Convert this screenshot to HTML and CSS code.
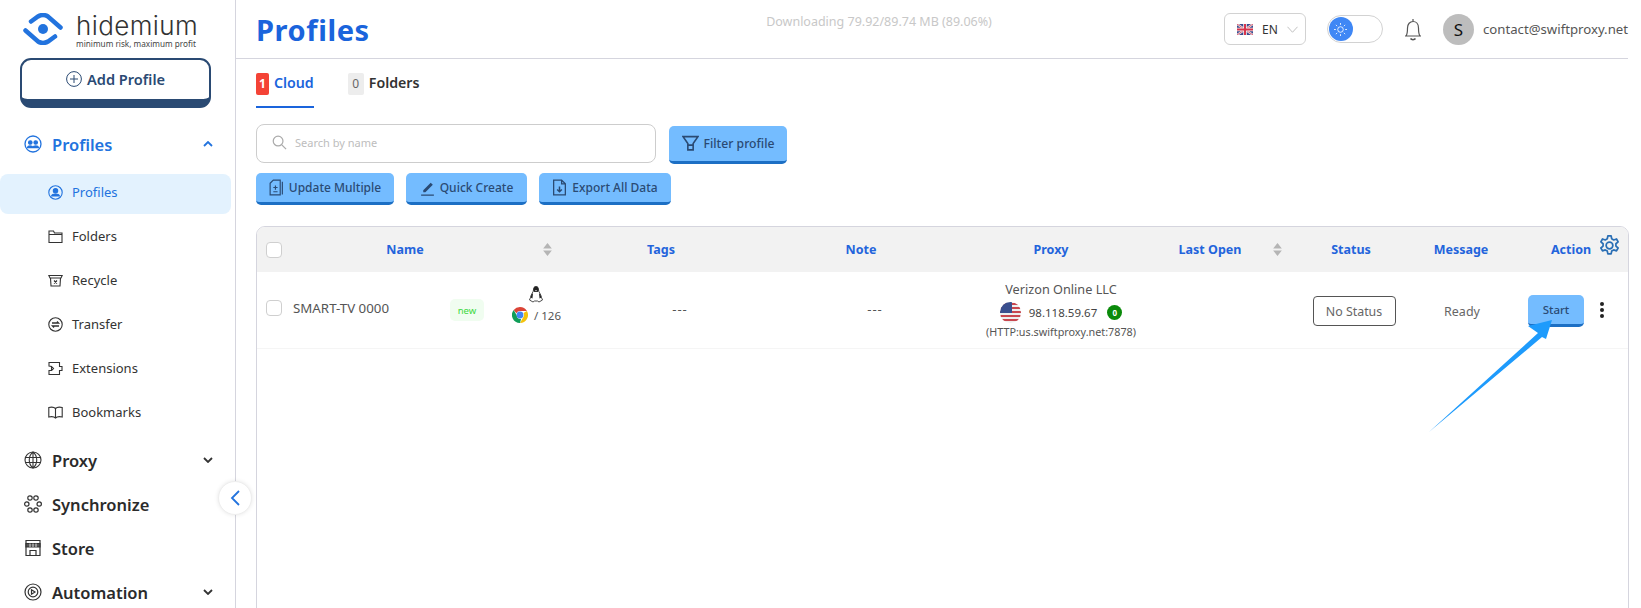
FILE: index.html
```html
<!DOCTYPE html>
<html lang="en">
<head>
<meta charset="utf-8">
<title>Hidemium Profiles</title>
<link rel="stylesheet" href="styles.css">
</head>
<body>
<div class="app">
  <aside class="sidebar">
    <div class="brand">
      <svg class="brand-mark" viewBox="0 0 40 32" fill="none" stroke="#2273de" stroke-width="4.500" stroke-linecap="round">
        <path d="M8 8.500L15 3.500Q20 .5 25 3.500L37.500 14.500"/>
        <path d="M2.500 17.500L15 28.500Q20 31.500 25 28.500L32 23.500"/>
        <circle cx="20" cy="16" r="5" fill="#2273de" stroke="none"/>
      </svg>
      <div class="brand-text">
        <div class="brand-name">hidemium</div>
        <div class="brand-tag">minimum risk, maximum profit</div>
      </div>
    </div>
    <button class="add-btn">
      <svg class="ic-add" viewBox="0 0 16 16" fill="none" stroke="#2a4a73" stroke-width="1"><circle cx="8" cy="8" r="7.400"/><path d="M8 4v8M4 8h8"/></svg>
      Add Profile
    </button>
    <nav class="nav">
      <a class="nav-main active">
        <svg class="ic-main" viewBox="0 0 18 18" fill="none" stroke="#2273de" stroke-width="1.300"><circle cx="9" cy="9" r="8"/><circle cx="6.300" cy="7.500" r="1.700" fill="#2273de"/><circle cx="11.700" cy="7.500" r="1.700" fill="#2273de"/><path d="M3.500 12.500c.5-2 4.500-2 5.500 0zM9 12.500c.5-2 5-2 5.500 0z" fill="#2273de"/></svg>
        <span>Profiles</span>
        <svg class="chev" viewBox="0 0 10 6" fill="none" stroke="#2273de" stroke-width="1.800"><path d="M1 5l4-4 4 4"/></svg>
      </a>
      <div class="subnav">
        <a class="nav-sub active">
          <svg class="ic-sub" viewBox="0 0 15 15" fill="none" stroke="#2273de" stroke-width="1.100"><circle cx="7.500" cy="7.500" r="6.700"/><circle cx="7.500" cy="5.800" r="2.200" fill="#2273de"/><path d="M3.600 11c.8-2.600 7-2.600 7.800 0z" fill="#2273de"/></svg>
          <span>Profiles</span>
        </a>
        <a class="nav-sub">
          <svg class="ic-sub" viewBox="0 0 15 15" fill="none" stroke="#333" stroke-width="1.100"><path d="M1 13.500V2h4.500l1 2H14v9.500zM1 5.500h13"/></svg>
          <span>Folders</span>
        </a>
        <a class="nav-sub">
          <svg class="ic-sub" viewBox="0 0 15 15" fill="none" stroke="#333" stroke-width="1.100"><path d="M.8 2.500h13.400L13 5H2zM2.500 5l.5 8h9l.5-8M6 7.500l3 3M9 7.500l-3 3"/></svg>
          <span>Recycle</span>
        </a>
        <a class="nav-sub">
          <svg class="ic-sub" viewBox="0 0 15 15" fill="none" stroke="#333" stroke-width="1.100"><circle cx="7.500" cy="7.500" r="6.700"/><path d="M4 6h6.500L9 4.500M11 9H4.500L6 10.500" stroke-width="1.300"/></svg>
          <span>Transfer</span>
        </a>
        <a class="nav-sub">
          <svg class="ic-sub" viewBox="0 0 15 15" fill="none" stroke="#333" stroke-width="1.100"><path d="M1 5V1.500h10.500V5.500h2.500v4h-2.500v4H1V9.500h2.500V5.500zM4 6l1.500 1.500L4 9"/></svg>
          <span>Extensions</span>
        </a>
        <a class="nav-sub">
          <svg class="ic-sub" viewBox="0 0 15 15" fill="none" stroke="#333" stroke-width="1.100"><path d="M7.500 3.500C6 2 3 2 .8 2.500v9.500c2.200-.5 5.200-.5 6.700 1 1.500-1.500 4.500-1.500 6.700-1V2.500C12 2 9 2 7.500 3.500zM7.500 3.500V13"/></svg>
          <span>Bookmarks</span>
        </a>
      </div>
      <a class="nav-main">
        <svg class="ic-main" viewBox="0 0 18 18" fill="none" stroke="#333" stroke-width="1.100"><circle cx="9" cy="9" r="8"/><path d="M1.500 6.500h15M1.500 11.500h15M9 1c-5 4-5 12 0 16M9 1c5 4 5 12 0 16M9 1v16"/></svg>
        <span>Proxy</span>
        <svg class="chev" viewBox="0 0 10 6" fill="none" stroke="#333" stroke-width="1.800"><path d="M1 1l4 4 4-4"/></svg>
      </a>
      <a class="nav-main">
        <svg class="ic-main" viewBox="0 0 18 18" fill="none" stroke="#333" stroke-width="1.200"><circle cx="6" cy="3" r="2.200"/><circle cx="12" cy="3" r="2.200"/><circle cx="2.800" cy="9" r="2.200"/><circle cx="15.200" cy="9" r="2.200"/><circle cx="6" cy="15" r="2.200"/><circle cx="12" cy="15" r="2.200"/></svg>
        <span>Synchronize</span>
      </a>
      <a class="nav-main">
        <svg class="ic-main" viewBox="0 0 18 18" fill="none" stroke="#333" stroke-width="1.200"><path d="M2 1.500h14v15H2zM2 4.500h14M6 16.500v-5h6v5"/><path d="M2 4.500h14V8H2z" fill="#555"/><path d="M6 4.500V8M9 4.500V8M12 4.500V8" stroke="#fff" stroke-width=".8"/></svg>
        <span>Store</span>
      </a>
      <a class="nav-main">
        <svg class="ic-main" viewBox="0 0 18 18" fill="none" stroke="#333" stroke-width="1.200"><circle cx="9" cy="9" r="8"/><circle cx="9" cy="9" r="4.800"/><path d="M7.500 6.800l3.500 2.200-3.500 2.200z"/></svg>
        <span>Automation</span>
        <svg class="chev" viewBox="0 0 10 6" fill="none" stroke="#333" stroke-width="1.800"><path d="M1 1l4 4 4-4"/></svg>
      </a>
    </nav>
  </aside>

  <button class="collapse">
    <svg viewBox="0 0 10 16" fill="none" stroke="#2273de" stroke-width="1.800"><path d="M8.500 1L1.500 8l7 7"/></svg>
  </button>

  <main class="main">
    <header class="topbar">
      <h1 class="title">Profiles</h1>
      <div class="download">Downloading 79.92/89.74 MB (89.06%)</div>
      <div class="top-tools">
        <div class="lang">
          <svg class="flag-uk" viewBox="0 0 16 11"><rect width="16" height="11" fill="#3b4a8c"/><path d="M0 0l16 11M16 0L0 11" stroke="#eee" stroke-width="2.200"/><path d="M0 0l16 11M16 0L0 11" stroke="#d8344c" stroke-width=".8"/><path d="M8 0v11M0 5.500h16" stroke="#eee" stroke-width="3.600"/><path d="M8 0v11M0 5.500h16" stroke="#d8344c" stroke-width="2"/></svg>
          <span class="lang-code">EN</span>
          <svg class="lang-chev" viewBox="0 0 12 7" fill="none" stroke="#bbb" stroke-width="1"><path d="M.5.500L6 6.500 11.500.5"/></svg>
        </div>
        <div class="toggle">
          <span class="knob">
            <svg viewBox="0 0 14 14" fill="none" stroke="#fff" stroke-width=".9"><circle cx="7" cy="7" r="3"/><path d="M7 0v2M7 12v2M0 7h2M12 7h2M2 2l1.400 1.400M10.600 10.600L12 12M2 12l1.400-1.400M10.600 3.400L12 2"/></svg>
          </span>
        </div>
        <svg class="bell" viewBox="0 0 18 23" fill="none" stroke="#555" stroke-width="1.200"><path d="M2 18c1.500-2 1.500-3 1.500-8C3.500 6 6 3.500 9 3.500S14.500 6 14.500 10c0 5 0 6 1.500 8zM1 18h16M9 1v2.500"/><path d="M6.500 20.500c1 1.500 4 1.500 5 0" stroke-width="1.500"/></svg>
        <div class="avatar">S</div>
        <span class="email">contact@swiftproxy.net</span>
      </div>
    </header>

    <div class="content">
      <div class="tabs">
        <div class="tab active"><span class="count red">1</span><span class="tab-label">Cloud</span></div>
        <div class="tab"><span class="count grey">0</span><span class="tab-label">Folders</span></div>
      </div>

      <div class="search-row">
        <label class="search">
          <svg viewBox="0 0 16 16" fill="none" stroke="#aaa" stroke-width="1.300"><circle cx="6.500" cy="6.500" r="5.200"/><path d="M10.500 10.500L15 15"/></svg>
          <span>Search by name</span>
        </label>
        <button class="btn filter">
          <svg class="ic-filter" viewBox="0 0 16 16" fill="none" stroke="#2a4a73" stroke-width="1.500"><path d="M1 1.500h14L10.500 8v6h-5V8zM5.500 9.500h5"/></svg>
          Filter profile
        </button>
      </div>

      <div class="actions">
        <button class="btn">
          <svg class="ic-btn" viewBox="0 0 14 16" fill="none" stroke="#2a4a73" stroke-width="1.100"><path d="M1 4l3-3h6.500v14H1zM12.500 2.500v12M6 6v4M4 8h4M4 12h4"/></svg>
          Update Multiple
        </button>
        <button class="btn">
          <svg class="ic-btn" viewBox="0 0 14 16"><path d="M3 10.500l7-7 2 2-7 7H3zM1 14.500h12v1.300H1z" fill="#2a4a73"/></svg>
          Quick Create
        </button>
        <button class="btn">
          <svg class="ic-btn" viewBox="0 0 14 16" fill="none" stroke="#2a4a73" stroke-width="1.200"><path d="M1.500 1h7.500l3.500 3.500v10.500h-11zM9 1v3.500h3.500"/><path d="M7 7v5M4.800 9.800L7 12l2.200-2.200" stroke-width="1.400"/></svg>
          Export All Data
        </button>
      </div>

      <section class="table">
        <div class="thead">
          <div class="cell"><span class="check"></span></div>
          <div class="cell th">Name</div>
          <div class="cell"><svg class="sort" viewBox="0 0 8 12"><path d="M4 0l4 5H0zM4 12l4-5H0z" fill="#b5b5b5"/></svg></div>
          <div class="cell th">Tags</div>
          <div class="cell th">Note</div>
          <div class="cell th">Proxy</div>
          <div class="cell th last-open">Last Open</div>
          <div class="cell"><svg class="sort" viewBox="0 0 8 12"><path d="M4 0l4 5H0zM4 12l4-5H0z" fill="#b5b5b5"/></svg></div>
          <div class="cell th">Status</div>
          <div class="cell th">Message</div>
          <div class="cell th action-th">Action</div>
          <div class="cell gear-cell">
            <svg class="gear" viewBox="0 0 24 24" fill="none" stroke="#2a6fb5" stroke-width="1.800" stroke-linejoin="round"><path d="M10.300 2h3.400l.6 3 2.100 1.200 2.900-1 1.700 3-2.300 2v2.400l2.300 2-1.700 3-2.900-1-2.100 1.200-.6 3h-3.400l-.6-3-2.100-1.200-2.900 1-1.700-3 2.300-2v-2.400l-2.300-2 1.700-3 2.900 1 2.100-1.200z"/><circle cx="12" cy="12" r="3.500"/></svg>
          </div>
        </div>
        <div class="trow">
          <div class="cell"><span class="check row-check"></span></div>
          <div class="cell name-cell"><span class="pname">SMART-TV 0000</span><span class="tag-new">new</span></div>
          <div class="cell browser-cell">
            <svg class="tux" viewBox="0 0 14 17"><path d="M7 .5C5 .5 4.400 2 4.500 4c0 2-2.500 4-3 7.500L.5 14l3.500 2 1.500-1h3L10 16l3.500-2-1-2.500C12 8 9.500 6 9.500 4 9.600 2 9 .5 7 .5z" fill="#fff" stroke="#222" stroke-width=".8"/><path d="M7 .5C5 .5 4.400 2 4.500 4.500c0 1 .5 1.500 2.500 1.500s2.500-.5 2.500-1.500C9.600 2 9 .5 7 .5zM4 7C2.500 8.500 1.800 10 1.500 11.500l2 1C3.500 10.500 4 9 4 7zM10 7c1.500 1.500 2.200 3 2.500 4.500l-2 1C10.500 10.500 10 9 10 7z" fill="#222"/><path d="M5.800 4.300h2.400L7 5.600z" fill="#ddd"/></svg>
            <div class="browser-ver">
              <svg class="chrome" viewBox="0 0 16 16"><path d="M8 0a8 8 0 0 1 6.930 4H8a4 4 0 0 0-3.600 2.300L1.700 3A8 8 0 0 1 8 0z" fill="#db4437"/><path d="M14.930 4A8 8 0 0 1 8 16l3.400-5.900A4 4 0 0 0 11.500 6z" fill="#f4c20d"/><path d="M8 16A8 8 0 0 1 1.700 3l3 5.200A4 4 0 0 0 9 11.900z" fill="#0f9d58"/><circle cx="8" cy="8" r="3.400" fill="#4285f4"/></svg>
              <span>/ 126</span>
            </div>
          </div>
          <div class="cell dash dash-tags">---</div>
          <div class="cell dash dash-note">---</div>
          <div class="cell proxy-cell">
            <div class="isp">Verizon Online LLC</div>
            <div class="ip-line">
              <svg class="flag-us" viewBox="0 0 21 21"><defs><clipPath id="uc"><circle cx="10.500" cy="10.500" r="10.500"/></clipPath></defs><g clip-path="url(#uc)"><rect width="21" height="21" fill="#eee"/><path d="M0 2h21M0 6h21M0 10h21M0 14h21M0 18h21" stroke="#c8474f" stroke-width="2"/><rect width="12" height="11" fill="#3a4f8e"/></g></svg>
              <span class="ip">98.118.59.67</span>
              <span class="zero">0</span>
            </div>
            <div class="host">(HTTP:us.swiftproxy.net:7878)</div>
          </div>
          <div class="cell"></div>
          <div class="cell"></div>
          <div class="cell status-cell"><span class="status">No Status</span></div>
          <div class="cell ready">Ready</div>
          <div class="cell"><button class="btn start">Start</button></div>
          <div class="cell"><span class="dots"><i></i><i></i><i></i></span></div>
        </div>
      </section>
    </div>
  </main>

  <svg class="arrow" viewBox="0 0 130 120"><path d="M0 112 L109 13 L99 6 L123 0 L117 19 L113 17 Z" fill="#1e9bfc"/></svg>
</div>
</body>
</html>
```

FILE: styles.css
```css
* { box-sizing: border-box; }
html, body { margin: 0; height: 608px; overflow: hidden; background: #fff; }
body { font-family: "Noto Sans", "Open Sans", sans-serif; color: #333; }
button { font-family: inherit; cursor: pointer; }
.app { position: relative; display: flex; height: 608px; width: 1641px; overflow: hidden; }

/* Sidebar */
.sidebar { width: 236px; flex: none; border-right: 1px solid #d5d5de; height: 100%; }
.brand { display: flex; align-items: flex-start; height: 58px; padding: 13px 0 0 23px; }
.brand-mark { width: 40px; height: 32px; flex: none; }
.brand-text { margin-left: 13px; margin-top: 2px; }
.brand-name { font-family: "Inter", sans-serif; font-weight: 300; font-size: 26px; line-height: 22px; color: #333; letter-spacing: .4px; }
.brand-tag { font-size: 8.200px; line-height: 9px; color: #444; white-space: nowrap; margin-top: 2px; }
.add-btn { display: flex; align-items: center; justify-content: center; gap: 5px; margin-left: 20px; width: 191px; height: 50px; padding: 0 0 2px; background: #fff; border: 2px solid #2a4a73; border-bottom-width: 9px; border-radius: 11px; color: #2a4a73; font-weight: 600; font-size: 14.600px; }
.ic-add { width: 16px; height: 16px; }
.nav { margin-top: 14px; display: flex; flex-direction: column; }
.nav-main { display: flex; align-items: center; height: 44px; padding-left: 24px; padding-right: 22px; font-size: 16.500px; font-weight: 600; color: #2b2b2b; }
.nav-main.active { color: #2273de; }
.nav-main span { flex: 1; margin-left: 10px; }
.ic-main { width: 18px; height: 18px; flex: none; }
.chev { width: 10px; height: 6px; flex: none; }
.subnav { margin: 4px 0 4px; }
.nav-sub { display: flex; align-items: center; height: 44px; padding-left: 48px; font-size: 13px; color: #333; position: relative; }
.nav-sub span { margin-left: 9px; }
.nav-sub.active { color: #2273de; }
.nav-sub.active::before { content: ""; position: absolute; left: 0; right: 4px; top: 4px; bottom: 0; background: #e3f2fe; border-radius: 8px; }
.nav-sub.active > * { position: relative; }
.ic-sub { width: 15px; height: 15px; flex: none; }

.collapse { position: absolute; left: 218px; top: 481px; width: 34px; height: 34px; border-radius: 50%; background: #fff; border: 1px solid #eee; box-shadow: 0 0 4px rgba(0,0,0,.1); display: flex; align-items: center; justify-content: center; padding: 0; }
.collapse svg { width: 11px; height: 16px; }

/* Main */
.main { flex: 1; min-width: 0; }
.topbar { position: relative; display: flex; align-items: center; height: 59px; margin-right: 13px; border-bottom: 1px solid #d5d5de; padding-left: 20px; }
.title { margin: 0; font-size: 29px; font-weight: 700; color: #1a64dc; line-height: 1; letter-spacing: .6px; }
.download { position: absolute; left: 512px; width: 262px; top: 13px; text-align: center; font-size: 12.500px; color: #c8c8c8; white-space: nowrap; }
.top-tools { margin-left: auto; display: flex; align-items: center; }
.lang { display: flex; align-items: center; width: 82px; height: 32px; border: 1px solid #d2d2d2; border-radius: 6px; padding-left: 12px; }
.flag-uk { width: 16px; height: 11px; }
.lang-code { font-size: 12px; margin-left: 9px; color: #333; }
.lang-chev { width: 11px; height: 7px; margin-left: 9px; }
.toggle { width: 56px; height: 28px; margin-left: 21px; border: 1px solid #d2d2d2; border-radius: 14px; padding: 1px; }
.knob { display: flex; width: 24px; height: 24px; border-radius: 50%; background: #3f87f5; align-items: center; justify-content: center; }
.knob svg { width: 13px; height: 13px; }
.bell { width: 18px; height: 23px; margin-left: 21px; }
.avatar { width: 31px; height: 31px; border-radius: 50%; background: #bdbdbd; margin-left: 21px; display: flex; align-items: center; justify-content: center; font-size: 17px; color: #111; }
.email { font-size: 13.200px; margin-left: 9px; color: #555; white-space: nowrap; }

.content { padding: 0 12px 0 20px; }
.tabs { display: flex; height: 49px; gap: 34px; }
.tab { display: flex; align-items: flex-start; gap: 5px; padding-top: 14px; height: 49px; font-size: 14.200px; font-weight: 600; color: #333; }
.tab.active { color: #1a64dc; border-bottom: 2px solid #1a64dc; }
.tab-label { line-height: 19px; }
.count { display: block; height: 22px; line-height: 22px; text-align: center; font-size: 12px; border-radius: 2px; }
.count.red { width: 13px; background: #f44336; color: #fff; font-weight: 700; }
.count.grey { width: 16px; background: #ededed; color: #666; font-weight: 400; }

.search-row { display: flex; align-items: flex-start; gap: 13px; margin-top: 16px; }
.search { display: flex; align-items: center; width: 400px; height: 39px; border: 1px solid #cdcdcd; border-radius: 8px; padding-left: 15px; padding-bottom: 2px; }
.search svg { width: 15px; height: 15px; }
.search span { margin-left: 8px; font-size: 11px; color: #bdbdbd; }
.btn { display: inline-flex; align-items: center; justify-content: center; gap: 5px; height: 32px; border: 0; border-bottom: 3px solid #1c6fc4; border-radius: 5px; background: #74bcff; color: #2a4a73; font-size: 12px; font-weight: 500; padding: 0; }
.filter { width: 118px; height: 38px; margin-top: 2px; font-size: 12.200px; }
.ic-filter { width: 17px; height: 17px; }
.ic-btn { width: 15px; height: 17px; }
.actions { display: flex; gap: 12px; margin-top: 9px; }
.actions .btn:nth-child(1) { width: 138px; }
.actions .btn:nth-child(2) { width: 121px; }
.actions .btn:nth-child(3) { width: 132px; }

.table { margin-top: 21px; height: 500px; border: 1px solid #d5d5de; border-radius: 9px; overflow: hidden; }
.thead, .trow { display: grid; grid-template-columns: 33px 230px 55px 172px 228px 152px 136px 28px 120px 100px 80px 37px; }
.thead { height: 45px; background: #f2f2f2; }
.trow { height: 77px; border-bottom: 1px solid #f5f5f5; }
.cell { display: flex; align-items: center; justify-content: center; min-width: 0; }
.th { font-size: 12.500px; font-weight: 700; color: #2364dc; white-space: nowrap; }
.last-open { padding-left: 30px; }
.action-th { padding-left: 40px; }
.check { display: block; width: 16px; height: 16px; background: #fff; border: 1px solid #cfcfcf; border-radius: 4px; }
.row-check { margin-bottom: 5px; }
.sort { width: 9px; height: 13px; }
.gear-cell { align-items: flex-start; padding-top: 7px; justify-content: flex-start; }
.gear { width: 23px; height: 23px; margin-left: 7px; }
.name-cell { justify-content: flex-start; position: relative; padding-left: 3px; padding-bottom: 5px; }
.pname { font-size: 13.300px; color: #555; }
.tag-new { position: absolute; left: 160px; top: 27px; width: 34px; height: 22px; background: #f0fdf0; color: #3bd83b; font-size: 9.500px; border-radius: 5px; display: flex; align-items: center; justify-content: center; }
.browser-cell { flex-direction: column; gap: 4px; padding-bottom: 11px; align-items: flex-start; margin-left: -8px; }
.tux { width: 14px; height: 17px; margin-left: 17px; }
.browser-ver { display: flex; align-items: center; gap: 6px; font-size: 11.500px; color: #555; white-space: nowrap; }
.chrome { width: 16px; height: 16px; }
.dash { font-size: 13px; color: #555; padding-bottom: 2px; letter-spacing: 1px; }
.dash-tags { padding-left: 38px; }
.dash-note { padding-left: 28px; }
.proxy-cell { flex-direction: column; padding-left: 20px; white-space: nowrap; }
.isp { font-size: 12.700px; color: #555; line-height: 17px; margin-bottom: 2px; }
.ip-line { display: flex; align-items: center; font-size: 11.500px; color: #444; height: 24px; }
.flag-us { width: 21px; height: 21px; }
.ip { margin-left: 8px; }
.zero { width: 15px; height: 15px; margin-left: 10px; border-radius: 50%; background: #0a8a0a; color: #fff; font-size: 8px; font-weight: 700; display: flex; align-items: center; justify-content: center; }
.host { font-size: 10.800px; color: #555; line-height: 15px; }
.status-cell { padding-left: 6px; padding-top: 2px; }
.status { display: flex; align-items: center; justify-content: center; width: 83px; height: 30px; border: 1px solid #555; border-radius: 4px; font-size: 12.400px; color: #666; }
.ready { font-size: 12.500px; color: #666; padding-top: 3px; padding-left: 2px; }
.start { width: 56px; height: 32px; font-size: 11.500px; margin-left: 10px; margin-top: 2px; }
.dots { display: flex; flex-direction: column; gap: 2px; margin-right: 16px; }
.dots i { display: block; width: 4px; height: 4px; border-radius: 50%; background: #222; }

.arrow { position: absolute; left: 1429px; top: 320px; width: 130px; height: 120px; }
```
